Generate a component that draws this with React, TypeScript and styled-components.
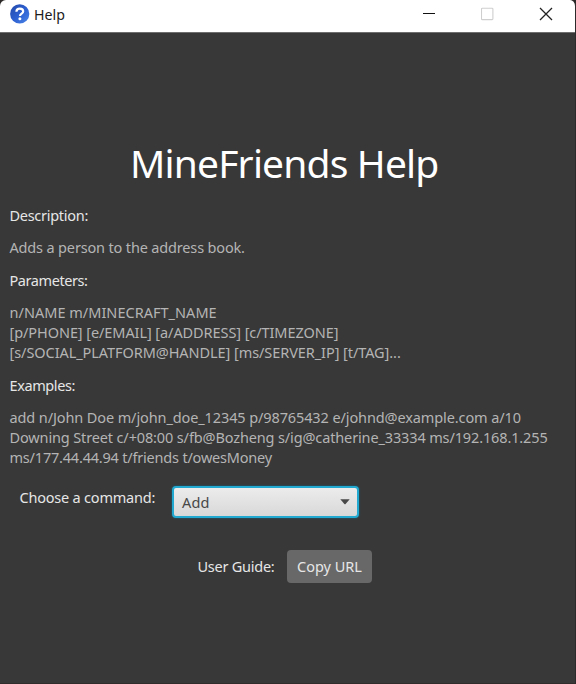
import React from "react";
import styled, { createGlobalStyle } from "styled-components";

const GlobalStyle = createGlobalStyle`
  *, *::before, *::after { box-sizing: border-box; }
  body { margin: 0; background: #2b2827; }
`;

const Window = styled.div`
  width: 576px;
  height: 684px;
  display: flex;
  flex-direction: column;
  overflow: hidden;
  border-right: 1px solid #2c2a2a;
  border-bottom: 1px solid #302c2c;
  border-radius: 6px 6px 0 0;
  background: #383838;
  font-family: "Noto Sans", "Open Sans", sans-serif;
  font-size: 14.5px;
  line-height: 20px;
`;

const TitleBar = styled.header`
  flex: none;
  height: 33px;
  padding: 0 0 4px 9px;
  display: flex;
  align-items: center;
  background: #fff;
  border-bottom: 1px solid #6e6e6e;
  color: #1c1c1c;
`;

const WindowTitle = styled.span`
  flex: 1;
  margin: 1px 0 0 4px;
  font-size: 14.2px;
`;

const WindowButton = styled.span`
  width: 58px;
  display: flex;
  justify-content: center;
`;

const Content = styled.main`
  display: flex;
  flex-direction: column;
  padding: 101px 9px 0 9.5px;
`;

const Heading = styled.h1`
  margin: 0 0 12.5px;
  padding-right: 7px;
  font-size: 39px;
  font-weight: 400;
  line-height: 58px;
  letter-spacing: -0.83px;
  text-align: center;
  color: #fff;
`;

const Sections = styled.div`
  display: flex;
  flex-direction: column;
  gap: 12.5px;
`;

const Line = styled.div<{ $track: number }>`
  height: 20px;
  white-space: pre;
  letter-spacing: ${(p) => p.$track}px;
`;

const Label = styled(Line)`
  color: #e6e6e6;
`;

const Body = styled.div`
  color: #b4b4b4;
`;

const CommandRow = styled.div`
  display: flex;
  align-items: flex-start;
  margin: 18.5px 0 0 10px;
`;

const CommandLabel = styled(Label)`
  width: 137.5px;
  margin-top: 1.5px;
`;

const Select = styled.div`
  width: 187px;
  height: 32px;
  margin-left: 15px;
  padding: 0 7px 0 8px;
  display: flex;
  align-items: center;
  justify-content: space-between;
  border: 2px solid #22a9d2;
  border-radius: 4px;
  background: linear-gradient(#ececec, #d8d8d8);
  box-shadow: 0 0 2px #0c6f90;
  color: #484848;
`;

const GuideRow = styled.div`
  display: flex;
  align-items: center;
  margin: 32px 0 0 188px;
`;

const GuideLabel = styled(Label)`
  width: 78px;
`;

const CopyButton = styled.button`
  width: 85px;
  height: 33px;
  margin-left: 11.5px;
  padding: 0;
  display: flex;
  align-items: center;
  justify-content: center;
  border: 0;
  border-radius: 4px;
  background: #686868;
  font: inherit;
  color: #e6e6e6;
`;

const sections = [
  {
    title: "Description:",
    track: -0.28,
    lines: [{ text: "Adds a person to the address book.", track: -0.16 }],
  },
  {
    title: "Parameters:",
    track: -0.42,
    lines: [
      { text: "n/NAME m/MINECRAFT_NAME", track: 0.02 },
      { text: "[p/PHONE] [e/EMAIL] [a/ADDRESS] [c/TIMEZONE]", track: -0.08 },
      { text: "[s/SOCIAL_PLATFORM@HANDLE] [ms/SERVER_IP] [t/TAG]...", track: -0.07 },
    ],
  },
  {
    title: "Examples:",
    track: -0.4,
    lines: [
      { text: "add n/John Doe m/john_doe_12345 p/98765432 e/johnd@example.com a/10", track: -0.11 },
      { text: "Downing Street c/+08:00 s/fb@Bozheng s/ig@catherine_33334 ms/192.168.1.255", track: -0.135 },
      { text: "ms/177.44.44.94 t/friends t/owesMoney", track: -0.2 },
    ],
  },
];

const HelpIcon = () => (
  <svg width="21" height="20" viewBox="0 0 21 20">
    <defs>
      <linearGradient id="disc" x1="0" y1="0" x2="1" y2="1">
        <stop offset="0" stopColor="#2449a8" />
        <stop offset="0.5" stopColor="#2c5fd0" />
        <stop offset="1" stopColor="#4b86e8" />
      </linearGradient>
    </defs>
    <circle cx="10.7" cy="9.9" r="9.6" fill="url(#disc)" />
    <path d="M7.4 7.7C7.5 5.5 8.9 4.6 10.8 4.6c2 0 3.4 1 3.4 2.7 0 2.4-3.2 2.3-3.2 4.8" fill="none" stroke="#fff" strokeWidth="2.2" />
    <circle cx="10.9" cy="14.8" r="1.5" fill="#fff" />
  </svg>
);

export default function App() {
  return (
    <>
      <GlobalStyle />
      <Window>
        <TitleBar>
          <HelpIcon />
          <WindowTitle>Help</WindowTitle>
          <WindowButton>
            <svg width="15" height="14" viewBox="0 0 15 14">
              <path d="M0 6.5h12" stroke="#111" />
            </svg>
          </WindowButton>
          <WindowButton>
            <svg width="15" height="14" viewBox="0 0 15 14">
              <rect x="0.5" y="1.2" width="11.4" height="11.4" rx="0.8" fill="none" stroke="#cfcfcf" strokeWidth="1.1" />
            </svg>
          </WindowButton>
          <WindowButton>
            <svg width="14" height="14" viewBox="0 0 14 14">
              <path d="M1 1l12 12M13 1L1 13" stroke="#222" strokeWidth="1.3" />
            </svg>
          </WindowButton>
        </TitleBar>
        <Content>
          <Heading>MineFriends Help</Heading>
          <Sections>
            {sections.map((section) => (
              <React.Fragment key={section.title}>
                <Label $track={section.track}>{section.title}</Label>
                <Body>
                  {section.lines.map((line) => (
                    <Line key={line.text} $track={line.track}>{line.text}</Line>
                  ))}
                </Body>
              </React.Fragment>
            ))}
          </Sections>
          <CommandRow>
            <CommandLabel $track={-0.21}>Choose a command:</CommandLabel>
            <Select>
              <Line $track={0.2}>Add</Line>
              <svg width="10" height="6" viewBox="0 0 10 6">
                <path d="M0.3 0.3h9.4L5.6 5q-0.6 0.6-1.2 0z" fill="#484848" />
              </svg>
            </Select>
          </CommandRow>
          <GuideRow>
            <GuideLabel $track={-0.25}>User Guide:</GuideLabel>
            <CopyButton>Copy URL</CopyButton>
          </GuideRow>
        </Content>
      </Window>
    </>
  );
}
